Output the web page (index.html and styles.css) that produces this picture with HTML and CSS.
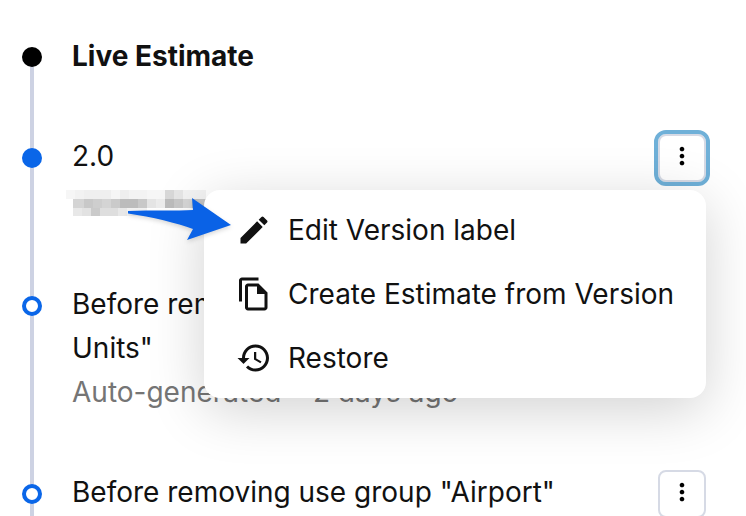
FILE: index.html
```html
<!DOCTYPE html>
<html lang="en">
<head>
<meta charset="utf-8">
<title>Versions</title>
<link rel="stylesheet" href="styles.css">
</head>
<body>
<main class="timeline">
  <section class="entry">
    <span class="dot dot-black"></span>
    <div class="entry-body"><div class="title-bold">Live Estimate</div></div>
  </section>
  <section class="entry">
    <span class="dot dot-blue"></span>
    <div class="entry-body">
      <div class="title">2.0</div>
      <svg class="smudge" width="140" height="26" viewBox="0 0 140 26" aria-hidden="true">
        <g>
          <rect x="0" y="0" width="9" height="9" fill="#f6f6f6"/><rect x="9" y="0" width="9" height="9" fill="#f2f2f2"/><rect x="18" y="0" width="27" height="9" fill="#efefef"/><rect x="45" y="0" width="9" height="9" fill="#f6f6f6"/><rect x="54" y="0" width="9" height="9" fill="#eeeeee"/><rect x="63" y="0" width="18" height="9" fill="#f3f3f3"/><rect x="81" y="0" width="18" height="9" fill="#f6f6f6"/><rect x="99" y="0" width="9" height="9" fill="#d8d8d8"/><rect x="108" y="0" width="9" height="9" fill="#e6e6e6"/><rect x="117" y="0" width="23" height="9" fill="#f3f3f3"/>
          <rect x="7" y="9" width="11" height="9" fill="#d4d4d4"/><rect x="18" y="9" width="9" height="9" fill="#c8c8c8"/><rect x="27" y="9" width="9" height="9" fill="#cecece"/><rect x="36" y="9" width="9" height="9" fill="#d4d4d4"/><rect x="45" y="9" width="9" height="9" fill="#cacaca"/><rect x="54" y="9" width="18" height="9" fill="#bcbcbc"/><rect x="72" y="9" width="9" height="9" fill="#c8c8c8"/><rect x="81" y="9" width="9" height="9" fill="#e4e4e4"/><rect x="90" y="9" width="9" height="9" fill="#ececec"/><rect x="99" y="9" width="9" height="9" fill="#bcbcbc"/><rect x="108" y="9" width="9" height="9" fill="#c8c8c8"/><rect x="117" y="9" width="9" height="9" fill="#d6d6d6"/><rect x="126" y="9" width="14" height="9" fill="#c4c4c4"/>
          <rect x="7" y="18" width="9" height="8" fill="#e8e8e8"/><rect x="16" y="18" width="9" height="8" fill="#e2e2e2"/><rect x="25" y="18" width="9" height="8" fill="#cacaca"/><rect x="34" y="18" width="18" height="8" fill="#dedede"/><rect x="52" y="18" width="9" height="8" fill="#e8e8e8"/><rect x="61" y="18" width="20" height="8" fill="#f2f2f2"/>
        </g>
      </svg>
    </div>
    <button class="kebab kebab-focus" type="button" aria-label="More">
      <svg class="kebab-icon" viewBox="0 0 24 24"><path d="M12 8c1.1 0 2-.9 2-2s-.9-2-2-2-2 .9-2 2 .9 2 2 2zm0 2c-1.1 0-2 .9-2 2s.9 2 2 2 2-.9 2-2-.9-2-2-2zm0 6c-1.1 0-2 .9-2 2s.9 2 2 2 2-.9 2-2-.9-2-2-2z"/></svg>
    </button>
  </section>
  <section class="entry">
    <span class="dot dot-ring"></span>
    <div class="entry-body">
      <div class="title">Before removing use group "Residential<br>Units"</div>
      <div class="meta">Auto-generated • 2 days ago</div>
    </div>
  </section>
  <section class="entry">
    <span class="dot dot-ring"></span>
    <div class="entry-body"><div class="title">Before removing use group "Airport"</div></div>
    <button class="kebab" type="button" aria-label="More">
      <svg class="kebab-icon" viewBox="0 0 24 24"><path d="M12 8c1.1 0 2-.9 2-2s-.9-2-2-2-2 .9-2 2 .9 2 2 2zm0 2c-1.1 0-2 .9-2 2s.9 2 2 2 2-.9 2-2-.9-2-2-2zm0 6c-1.1 0-2 .9-2 2s.9 2 2 2 2-.9 2-2-.9-2-2-2z"/></svg>
    </button>
  </section>
</main>

<ul class="menu">
  <li class="menu-item">
    <svg class="menu-icon" viewBox="0 0 24 24"><path d="M3 17.25V21h3.75L17.81 9.94l-3.75-3.75L3 17.25zM20.71 7.04c.39-.39.39-1.02 0-1.41l-2.34-2.34a.9959.9959 0 0 0-1.41 0l-1.83 1.83 3.75 3.75 1.83-1.83z"/></svg>
    <span>Edit Version label</span>
  </li>
  <li class="menu-item">
    <svg class="menu-icon" viewBox="0 0 24 24"><path d="M15 1H4c-1.1 0-2 .9-2 2v14h2V3h11V1zm-1 4H8c-1.1 0-1.99.9-1.99 2L6 21c0 1.1.89 2 1.99 2H19c1.1 0 2-.9 2-2V11l-6-6zM8 21V7h6v5h5v9H8z"/></svg>
    <span>Create Estimate from Version</span>
  </li>
  <li class="menu-item">
    <svg class="menu-icon" viewBox="0 0 24 24"><path d="M13 3c-4.97 0-9 4.03-9 9H1l3.89 3.89.07.14L9 12H6c0-3.87 3.13-7 7-7s7 3.13 7 7-3.13 7-7 7c-1.93 0-3.68-.79-4.94-2.06l-1.42 1.42C8.27 19.99 10.51 21 13 21c4.97 0 9-4.03 9-9s-4.03-9-9-9zm-1 5v5l4.28 2.54.72-1.21-3.5-2.08V8H12z"/></svg>
    <span>Restore</span>
  </li>
</ul>

<svg class="arrow" width="110" height="46" viewBox="0 0 110 46" aria-hidden="true">
  <path d="M1 13 C25 12 50 13 66 12 L65 0 L104 27 L60 42 L66 31 C50 25 25 19 1 15.5 Z"/>
</svg>
</body>
</html>
```
FILE: styles.css
```css
* { box-sizing: border-box; }
html, body { margin: 0; height: 100%; }
body {
  position: relative;
  overflow: hidden;
  background: #fff;
  color: #111;
  font-family: Inter, "Liberation Sans", sans-serif;
  font-size: 28px;
  line-height: 44px;
}
.timeline {
  position: relative;
  display: flex;
  flex-direction: column;
  gap: 56px;
  padding: 34px 40px 0 72px;
}
.timeline::before {
  content: "";
  position: absolute;
  left: 30px;
  top: 56px;
  bottom: -40px;
  width: 4px;
  background: #cdd2e3;
}
.entry { position: relative; display: flex; justify-content: space-between; align-items: flex-start; }
.dot {
  position: absolute;
  left: -50px;
  top: 14px;
  width: 20px;
  height: 20px;
  border-radius: 50%;
}
.dot-black { background: #000; top: 13px; }
.dot-blue { background: #0a66e8; }
.dot-ring { background: #fff; border: 4px solid #0a66e8; }
.title-bold { font-weight: 700; }
.smudge { display: block; margin: 12px 0 10px -6px; }
.meta { color: #757575; }
.kebab {
  flex: none;
  display: flex;
  align-items: center;
  justify-content: center;
  width: 48px;
  height: 48px;
  padding: 0 0 4px;
  background: #fff;
  border: 2px solid #d6dae5;
  border-radius: 8px;
}
.kebab-focus { outline: 4px solid #6fb0d8; }
.kebab-icon { width: 28px; height: 28px; fill: #000; }
.menu {
  position: absolute;
  left: 204px;
  top: 190px;
  width: 502px;
  margin: 0;
  padding: 8px 0;
  list-style: none;
  background: #fff;
  border-radius: 16px;
  box-shadow: 0 12px 56px rgba(0, 0, 0, 0.18);
}
.menu-item { display: flex; align-items: center; gap: 16px; height: 64px; padding-left: 32px; }
.menu-icon { flex: none; width: 36px; height: 36px; fill: #111; }
.arrow { position: absolute; left: 127px; top: 198px; fill: #0a62e6; filter: drop-shadow(0 2px 2px rgba(0, 0, 0, 0.15)); }
```
